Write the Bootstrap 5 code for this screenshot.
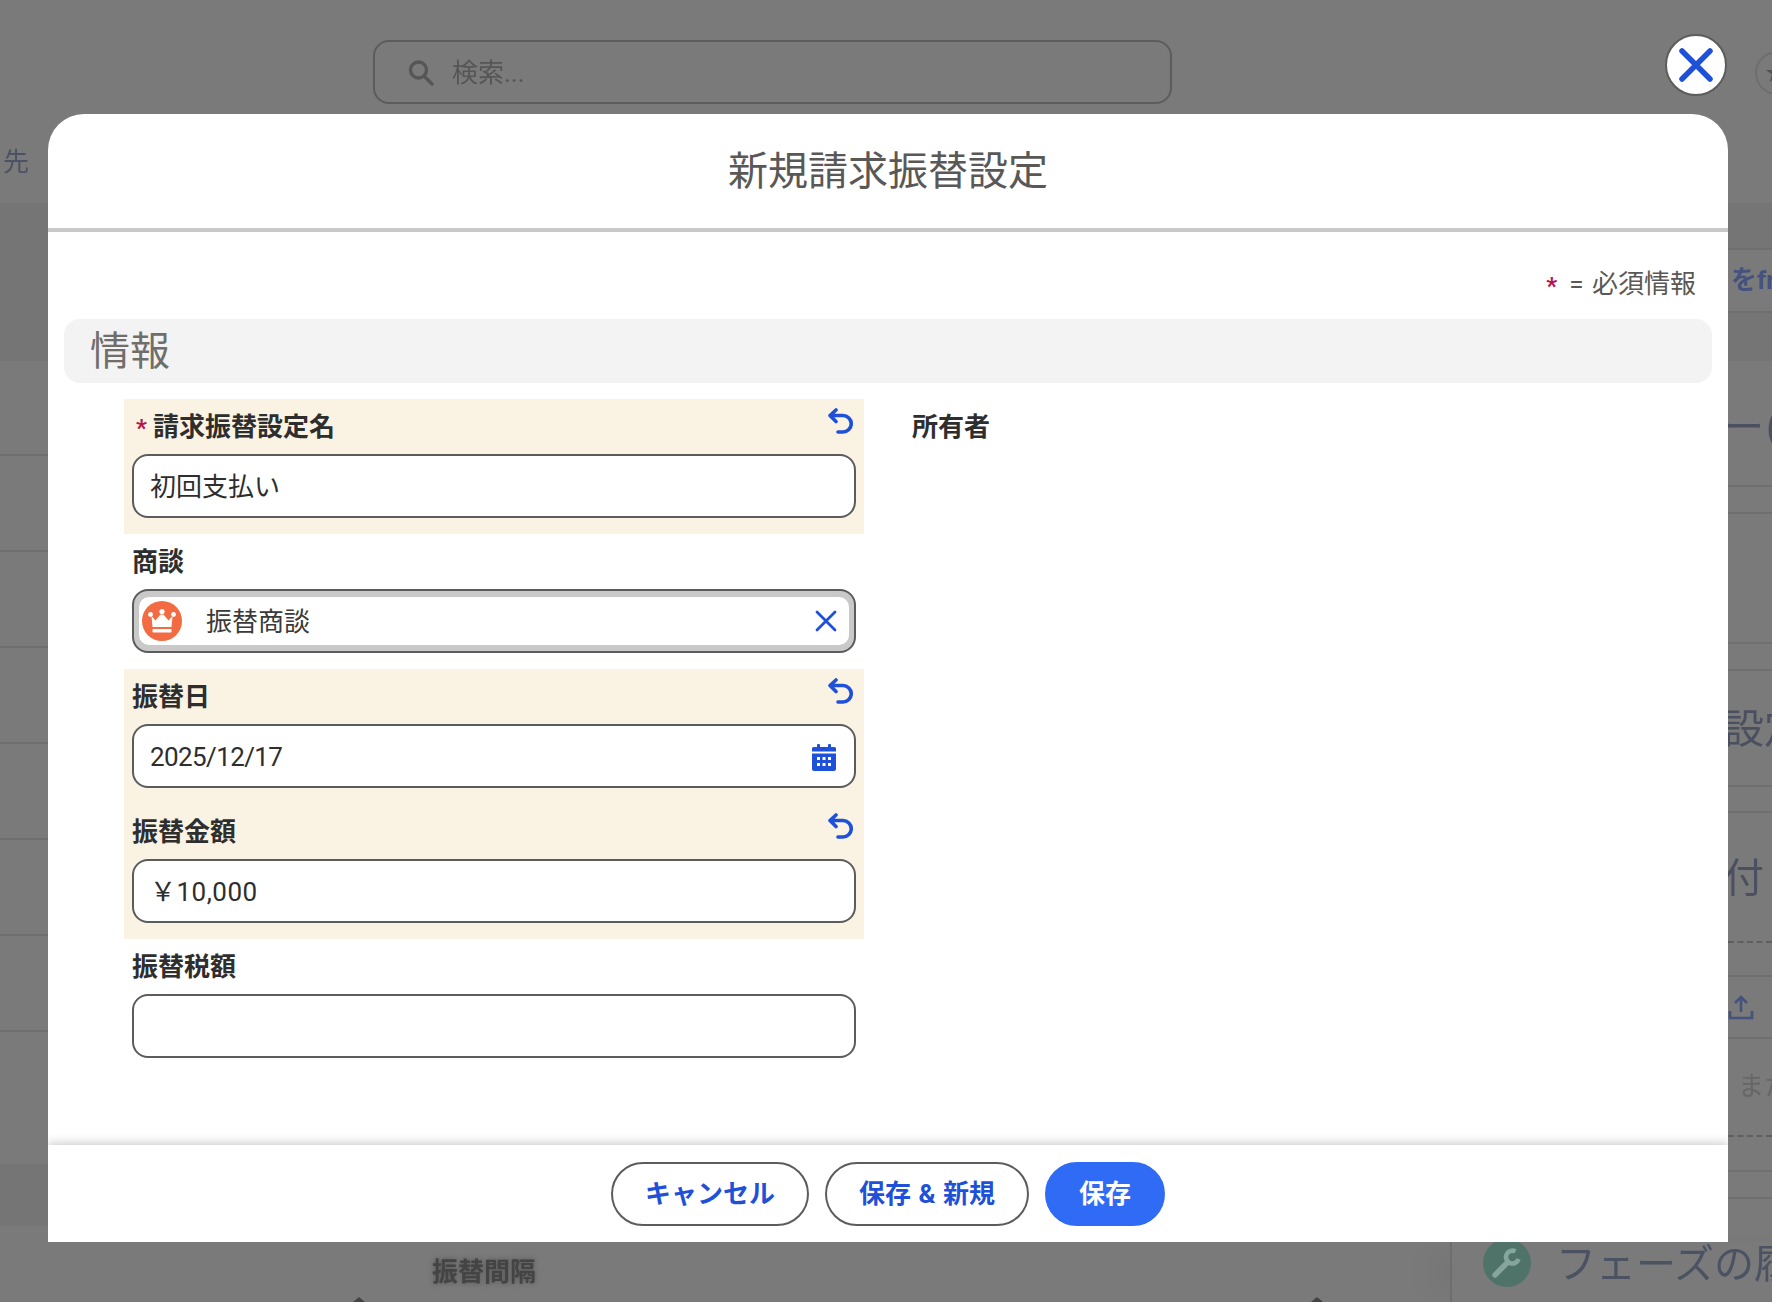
<!DOCTYPE html>
<html lang="ja">
<head>
  <meta charset="UTF-8">
  <title>新規請求振替設定</title>
  <link href="https://cdn.jsdelivr.net/npm/bootstrap@5.3.3/dist/css/bootstrap.min.css" rel="stylesheet">
  <style>
    html, body { height: 100%; }
    body { width: 1772px; height: 1302px; overflow: hidden; background: #7a7a7a; color: #2e2e2e;
      font-family: Roboto, "Noto Sans CJK JP", sans-serif; font-size: 26px; line-height: 1.3; }
    .page { width: 1772px; height: 1302px; position: relative; overflow: hidden; }

    /* dimmed page behind the dialog */
    .top-bar, .middle, .bottom-bar { filter: blur(.5px); }
    .top-bar { height: 114px; padding: 40px 0 0 373px; }
    .search-box { width: 799px; height: 64px; flex: none; border: 2px solid #5c5c5c; border-radius: 16px; padding-left: 33px; gap: 18px; color: #565656; }
    .search-word { padding-top: 4px; }
    .star-btn { width: 44px; height: 44px; margin: 11px 0 0 583px; border: 2px solid #6e6e6e; border-radius: 50%; color: #505050; font-size: 22px; flex: none; padding-left: 8px; }
    .middle { height: 1128px; }
    .edge-left { width: 48px; flex: none; overflow: hidden; color: #4b5263; }
    .edge-first { height: 89px; padding: 9px 0 0 3px; }
    .edge-right { width: 44px; flex: none; margin-left: auto; overflow: hidden; color: #4a505f; }
    .strip { border-bottom: 2px solid #6f6f6f; overflow: hidden; white-space: nowrap; }
    .strip-dashed { border-bottom: 2px dashed #5f5f5f; overflow: hidden; white-space: nowrap; }
    .strip-dark { background: #757575; }
    .big-text { font-size: 40px; }
    .big-low { padding-top: 4px; }
    .big-cut { margin-left: -4px; }
    .paren-text { margin-left: -4px; letter-spacing: -4px; padding-top: 10px; }
    .link-text { color: #44527e; font-weight: 700; padding-left: 3px; }
    .faded-text { color: #666; padding-left: 10px; }
    .bottom-bar { height: 60px; }
    .bottom-left { width: 1450px; padding: 14px 0 0 432px; color: #444; font-weight: 700; text-shadow: 0 0 5px rgba(60,60,60,.6); flex: none; position: relative; }
    .mini-tip { position: absolute; top: 55px; }
    .bottom-right { border-left: 2px solid #6e6e6e; padding-left: 31px; gap: 25px; color: #4b5262; box-shadow: -30px 0 30px -10px rgba(0,0,0,.04); height: 100%; flex: none; }
    .wrench-dot { width: 48px; height: 48px; border-radius: 50%; background: #4f7369; flex: none; margin-top: -3px; }
    .phase-text { margin-top: -3px; white-space: nowrap; }

    /* dialog */
    .close-round { position: absolute; left: 1665px; top: 34px; width: 62px; height: 62px; padding: 0; border: 2px solid #5c5c5c; border-radius: 50%; background: #fff; z-index: 5; }
    .sheet { position: absolute; left: 48px; top: 114px; width: 1680px; height: 1128px; z-index: 4; }
    .sheet-box { height: 100%; background: #fff; border: 0; border-radius: 36px 36px 0 0; overflow: hidden; }
    .sheet-head { height: 118px; padding: 0 0 4px; border: 0; border-bottom: 4px solid #c9c9c9; border-radius: 0; justify-content: center; }
    .sheet-title { font-size: 40px; font-weight: 400; color: #5a5856; margin: 0; line-height: 1.2; padding-top: 6px; }
    .sheet-body { padding: 0; flex: 1 1 auto; overflow: hidden; }
    .req-line { height: 87px; padding: 0 32px 17px 0; color: #5a5856; gap: 12px; word-spacing: 2px; }
    .req-star { color: #b5144f; font-size: 24px; font-weight: 700; }
    .section-bar { height: 64px; margin: 0 16px; padding: 2px 0 0 26px; background: #f3f3f3; border-radius: 16px; font-size: 40px; color: #706e6b; line-height: 1; }
    .fields { margin: 16px 0 0 76px; }
    .col-left { width: 740px; flex: none; }
    .col-right { width: 700px; flex: none; padding: 2px 0 0 48px; font-weight: 700; height: 55px; }
    .field { height: 135px; padding: 0 8px; }
    .field-changed { background: #faf3e3; }
    .field-top { height: 55px; padding-top: 2px; }
    .field-label { font-weight: 700; color: #2e2e2e; margin: 0; }
    .mark-req { color: #b5144f; font-size: 24px; margin: 0 6px 0 4px; }
    .undo-ico { margin: -13px 3px 0 0; }
    .text-input { height: 64px; border: 2px solid #5c5c5c; border-radius: 16px; padding: 0 16px; font-size: 26px; color: #2e2e2e; background: #fff; }
    .text-cjk { padding-bottom: 4px; }
    .text-date { padding-top: 2px; letter-spacing: -.6px; }
    .text-amount { padding-bottom: 4px; letter-spacing: .5px; }
    .date-wrap { position: relative; }
    .date-ico { position: absolute; left: 680px; top: 20px; }
    .picked-box { height: 64px; border: 2px solid #5c5c5c; border-radius: 16px; background: #c9c9c9; padding: 6px 5px; }
    .picked-inner { height: 100%; background: #fff; border-radius: 10px; padding: 0 12px 0 3px; color: #3a3a3a; }
    .picked-name { padding-top: 4px; }
    .crown-dot { width: 40px; height: 40px; flex: none; margin-right: 24px; }
    .sheet-foot { height: 97px; padding: 0; border: 0; border-radius: 0; justify-content: center; gap: 16px; background: #fff; box-shadow: 0 -1px 10px rgba(0,0,0,.24); position: relative; flex-wrap: nowrap; }
    .sheet-foot > .btn { margin: 0; height: 64px; border-radius: 32px; font-size: 26px; font-weight: 700; padding: 0 32px; line-height: 1; }
    .sheet-foot > .btn-wide { word-spacing: 1px; }
    .btn-plain { background: #fff; border: 2px solid #5c5c5c; color: #1f50d8; }
    .btn-main { background: #2f6bf5; border: 2px solid #2f6bf5; color: #fff; }
  </style>
</head>
<body>
  <div class="page">
    <!-- dimmed page -->
    <div class="top-bar d-flex">
      <div class="search-box d-flex align-items-center">
        <svg width="26" height="27" viewBox="0 0 26 27" fill="none" stroke="#565656" stroke-width="3.4" stroke-linecap="round"><circle cx="10.5" cy="11" r="8"/><path d="M16.5 17.5 L24 25"/></svg>
        <span class="search-word">検索...</span>
      </div>
      <div class="star-btn d-flex align-items-center">★</div>
    </div>

    <div class="middle d-flex">
      <div class="edge-left">
        <div class="edge-first d-flex align-items-center">先</div>
        <div class="strip-dark" style="height:158px"></div>
        <div class="strip" style="height:95px"></div>
        <div class="strip" style="height:96px"></div>
        <div class="strip" style="height:96px"></div>
        <div class="strip" style="height:96px"></div>
        <div class="strip" style="height:96px"></div>
        <div class="strip" style="height:96px"></div>
        <div class="strip" style="height:96px"></div>
        <div style="height:132px"></div>
        <div class="strip-dark" style="height:62px"></div>
      </div>

      <div class="edge-right">
        <div style="height:89px"></div>
        <div class="strip strip-dark" style="height:47px"></div>
        <div class="strip link-text d-flex align-items-center" style="height:63px">をfr</div>
        <div class="strip-dark" style="height:48px"></div>
        <div class="strip big-text d-flex align-items-center" style="height:126px"><span class="paren-text">ー (</span></div>
        <div class="strip" style="height:27px"></div>
        <div class="strip" style="height:130px"></div>
        <div class="strip" style="height:27px"></div>
        <div class="strip big-text big-low d-flex align-items-center" style="height:116px"><span class="big-cut">設定</span></div>
        <div class="strip" style="height:26px"></div>
        <div class="strip-dashed big-text big-low d-flex align-items-center" style="height:130px"><span class="big-cut">付</span></div>
        <div class="strip" style="height:34px"></div>
        <div class="strip d-flex align-items-center" style="height:62px">
          <svg width="26" height="26" viewBox="0 0 26 26" fill="none" stroke="#44527e" stroke-width="2.6"><path d="M13 18 V3 M7 9 L13 3 L19 9 M2 17 V24 H24 V17"/></svg>
        </div>
        <div class="strip-dashed faded-text d-flex align-items-center" style="height:98px">また</div>
        <div class="strip" style="height:35px"></div>
        <div class="strip" style="height:27px"></div>
      </div>
    </div>

    <div class="bottom-bar d-flex">
      <div class="bottom-left">振替間隔
        <svg class="mini-tip" style="left:353px" width="12" height="5" viewBox="0 0 12 5" fill="#444"><path d="M6 0 L12 5 H0Z"/></svg>
        <svg class="mini-tip" style="left:1311px" width="12" height="5" viewBox="0 0 12 5" fill="#444"><path d="M6 0 L12 5 H0Z"/></svg>
      </div>
      <div class="bottom-right d-flex align-items-start">
        <div class="wrench-dot d-flex align-items-center justify-content-center">
          <svg width="32" height="32" viewBox="0 0 32 32" fill="none" stroke="#86a59c" stroke-width="4.6"><path d="M24.5 4.5 A6.4 6.4 0 1 0 27.5 12"/><path stroke-width="5.4" stroke-linecap="round" d="M4 28 L16.5 15.5"/></svg>
        </div>
        <span class="big-text phase-text">フェーズの履歴</span>
      </div>
    </div>

    <!-- dialog -->
    <button type="button" class="close-round d-flex align-items-center justify-content-center" aria-label="閉じる">
      <svg width="34" height="34" viewBox="0 0 34 34" stroke="#1f50d8" stroke-width="5.5" stroke-linecap="round"><path d="M3 3 L31 31 M31 3 L3 31"/></svg>
    </button>

    <div class="sheet">
      <div class="modal-content sheet-box">
        <div class="modal-header sheet-head">
          <h2 class="sheet-title">新規請求振替設定</h2>
        </div>

        <div class="modal-body sheet-body">
          <div class="req-line d-flex justify-content-end align-items-end">
            <span class="req-star">*</span><span>= 必須情報</span>
          </div>
          <div class="section-bar d-flex align-items-center">情報</div>

          <form class="fields row g-0">
            <div class="col-left">
              <div class="field field-changed">
                <div class="field-top d-flex align-items-center justify-content-between">
                  <label class="field-label" for="nameInput"><span class="mark-req">*</span>請求振替設定名</label>
                  <svg class="undo-ico" width="25" height="26" viewBox="0 0 25 26" fill="none" stroke="#1f50d8" stroke-width="3.6" stroke-linecap="round" stroke-linejoin="round"><path d="M8 2 L2 7.5 L8 13.5 M2.5 7.5 H15 A8.2 8.2 0 0 1 15 24 H10"/></svg>
                </div>
                <input id="nameInput" type="text" class="form-control text-input text-cjk" value="初回支払い">
              </div>

              <div class="field">
                <div class="field-top d-flex align-items-center">
                  <span class="field-label">商談</span>
                </div>
                <div class="picked-box">
                  <div class="picked-inner d-flex align-items-center">
                    <svg class="crown-dot" viewBox="0 0 40 40"><circle cx="20" cy="20" r="20" fill="#f26b42"/><path fill="#fff" d="M9.5 15 L13.5 19.5 L18.5 13.5 H21.5 L26.5 19.5 L30.5 15 L29.5 26 H10.5Z"/><circle cx="20" cy="10.5" r="2.6" fill="#fff"/><circle cx="8.5" cy="13.5" r="2.4" fill="#fff"/><circle cx="31.5" cy="13.5" r="2.4" fill="#fff"/><rect x="10.5" y="28" width="19" height="3.6" rx=".8" fill="#fff"/></svg>
                    <span class="picked-name">振替商談</span>
                    <svg class="ms-auto" width="22" height="22" viewBox="0 0 22 22" stroke="#1f50d8" stroke-width="2.8" stroke-linecap="round"><path d="M2 2 L20 20 M20 2 L2 20"/></svg>
                  </div>
                </div>
              </div>

              <div class="field field-changed">
                <div class="field-top d-flex align-items-center justify-content-between">
                  <label class="field-label" for="dateInput">振替日</label>
                  <svg class="undo-ico" width="25" height="26" viewBox="0 0 25 26" fill="none" stroke="#1f50d8" stroke-width="3.6" stroke-linecap="round" stroke-linejoin="round"><path d="M8 2 L2 7.5 L8 13.5 M2.5 7.5 H15 A8.2 8.2 0 0 1 15 24 H10"/></svg>
                </div>
                <div class="date-wrap">
                  <input id="dateInput" type="text" class="form-control text-input text-date" value="2025/12/17">
                  <svg class="date-ico" width="24" height="27" viewBox="0 0 24 27" fill="#1f50d8"><rect x="5" y="0" width="3" height="5" rx="1"/><rect x="16" y="0" width="3" height="5" rx="1"/><path d="M1.5 3 H22.5 A1.5 1.5 0 0 1 24 4.5 V7.5 H0 V4.5 A1.5 1.5 0 0 1 1.5 3Z"/><path fill-rule="evenodd" d="M0 9.5 H24 V25 A2 2 0 0 1 22 27 H2 A2 2 0 0 1 0 25Z M5 13 V16 H8 V13Z M10.5 13 V16 H13.5 V13Z M16 13 V16 H19 V13Z M5 19 V22 H8 V19Z M10.5 19 V22 H13.5 V19Z M16 19 V22 H19 V19Z"/></svg>
                </div>
              </div>

              <div class="field field-changed">
                <div class="field-top d-flex align-items-center justify-content-between">
                  <label class="field-label" for="amountInput">振替金額</label>
                  <svg class="undo-ico" width="25" height="26" viewBox="0 0 25 26" fill="none" stroke="#1f50d8" stroke-width="3.6" stroke-linecap="round" stroke-linejoin="round"><path d="M8 2 L2 7.5 L8 13.5 M2.5 7.5 H15 A8.2 8.2 0 0 1 15 24 H10"/></svg>
                </div>
                <input id="amountInput" type="text" class="form-control text-input text-amount" value="￥10,000">
              </div>

              <div class="field">
                <div class="field-top d-flex align-items-center">
                  <label class="field-label" for="taxInput">振替税額</label>
                </div>
                <input id="taxInput" type="text" class="form-control text-input">
              </div>
            </div>

            <div class="col-right d-flex align-items-center">所有者</div>
          </form>
        </div>

        <div class="modal-footer sheet-foot">
          <button type="button" class="btn btn-plain">キャンセル</button>
          <button type="button" class="btn btn-plain btn-wide">保存 &amp; 新規</button>
          <button type="button" class="btn btn-main">保存</button>
        </div>
      </div>
    </div>
  </div>

  <script src="https://cdn.jsdelivr.net/npm/bootstrap@5.3.3/dist/js/bootstrap.bundle.min.js"></script>
</body>
</html>
